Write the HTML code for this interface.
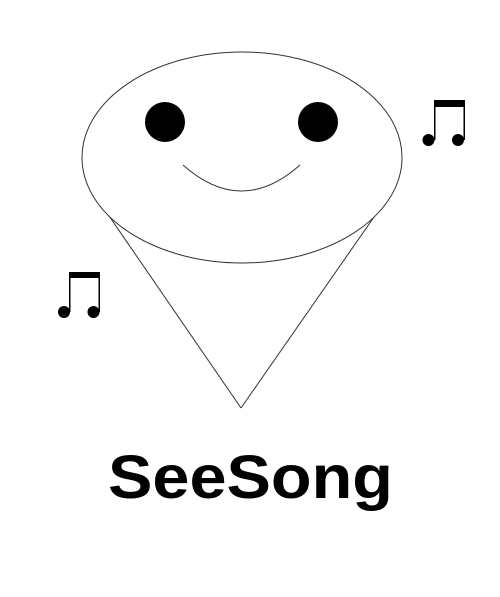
<!DOCTYPE html>
<html><head><style>html,body{margin:0;padding:0;background:#fff;width:500px;height:597px;overflow:hidden}</style></head>
<body>
<svg width="500" height="597" xmlns="http://www.w3.org/2000/svg">
<g fill="none" stroke="#333" stroke-width="1">
<line x1="107" y1="213" x2="241" y2="408"/>
<line x1="374" y1="217" x2="241" y2="408"/>
<ellipse cx="242" cy="157.5" rx="160" ry="105.5" fill="#fff"/>
<path d="M183 165 Q241.5 217 300 165"/>
</g>
<circle cx="165" cy="122" r="20" fill="#000"/>
<circle cx="318" cy="122" r="20" fill="#000"/>
<g fill="#000">
<rect x="69" y="272" width="31" height="6"/>
<rect x="69" y="272" width="1.5" height="40"/>
<rect x="98.5" y="272" width="1.5" height="40"/>
<circle cx="64" cy="312" r="6"/>
<circle cx="93.5" cy="312" r="6"/>
<rect x="434" y="100" width="31" height="7"/>
<rect x="434" y="100" width="1.5" height="40"/>
<rect x="463.5" y="100" width="1.5" height="40"/>
<circle cx="428.5" cy="140" r="6"/>
<circle cx="458" cy="140" r="6"/>
</g>
<text x="108" y="498" font-family="Liberation Sans, sans-serif" font-weight="bold" font-size="61" textLength="285" lengthAdjust="spacingAndGlyphs" fill="#000">SeeSong</text>
</svg>
</body></html>
